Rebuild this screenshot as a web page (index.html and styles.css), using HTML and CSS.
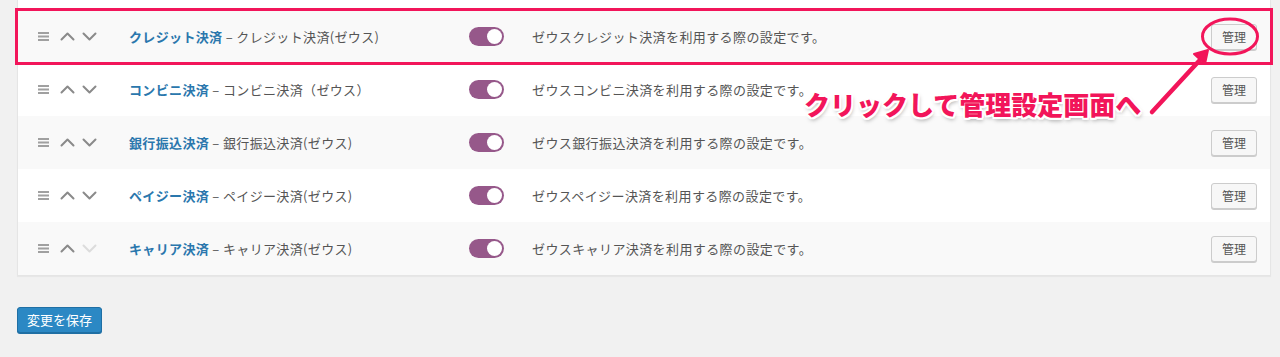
FILE: index.html
```html
<!DOCTYPE html>
<html lang="ja">
<head>
<meta charset="utf-8">
<title>決済設定</title>
<link rel="stylesheet" href="styles.css">
</head>
<body>
<div class="page">
  <div class="table">
    <div class="table-top"></div>

    <div class="row alt">
      <div class="sort">
        <svg class="ham" width="11" height="9" viewBox="0 0 11 9"><rect y="0" width="11" height="2"/><rect y="3.5" width="11" height="2"/><rect y="7" width="11" height="2"/></svg>
        <svg class="chev" width="15" height="9" viewBox="0 0 15 9"><polyline points="1.5,7.5 7.5,1.5 13.5,7.5"/></svg>
        <svg class="chev" width="15" height="9" viewBox="0 0 15 9"><polyline points="1.5,1.5 7.5,7.5 13.5,1.5"/></svg>
      </div>
      <div class="name"><a href="#">クレジット決済</a> – クレジット決済(ゼウス)</div>
      <div class="toggle"><span class="knob"></span></div>
      <div class="desc">ゼウスクレジット決済を利用する際の設定です。</div>
      <div class="action"><button class="btn">管理</button></div>
    </div>

    <div class="row">
      <div class="sort">
        <svg class="ham" width="11" height="9" viewBox="0 0 11 9"><rect y="0" width="11" height="2"/><rect y="3.5" width="11" height="2"/><rect y="7" width="11" height="2"/></svg>
        <svg class="chev" width="15" height="9" viewBox="0 0 15 9"><polyline points="1.5,7.5 7.5,1.5 13.5,7.5"/></svg>
        <svg class="chev" width="15" height="9" viewBox="0 0 15 9"><polyline points="1.5,1.5 7.5,7.5 13.5,1.5"/></svg>
      </div>
      <div class="name"><a href="#">コンビニ決済</a> – コンビニ決済（ゼウス）</div>
      <div class="toggle"><span class="knob"></span></div>
      <div class="desc">ゼウスコンビニ決済を利用する際の設定です。</div>
      <div class="action"><button class="btn">管理</button></div>
    </div>

    <div class="row alt">
      <div class="sort">
        <svg class="ham" width="11" height="9" viewBox="0 0 11 9"><rect y="0" width="11" height="2"/><rect y="3.5" width="11" height="2"/><rect y="7" width="11" height="2"/></svg>
        <svg class="chev" width="15" height="9" viewBox="0 0 15 9"><polyline points="1.5,7.5 7.5,1.5 13.5,7.5"/></svg>
        <svg class="chev" width="15" height="9" viewBox="0 0 15 9"><polyline points="1.5,1.5 7.5,7.5 13.5,1.5"/></svg>
      </div>
      <div class="name"><a href="#">銀行振込決済</a> – 銀行振込決済(ゼウス)</div>
      <div class="toggle"><span class="knob"></span></div>
      <div class="desc">ゼウス銀行振込決済を利用する際の設定です。</div>
      <div class="action"><button class="btn">管理</button></div>
    </div>

    <div class="row">
      <div class="sort">
        <svg class="ham" width="11" height="9" viewBox="0 0 11 9"><rect y="0" width="11" height="2"/><rect y="3.5" width="11" height="2"/><rect y="7" width="11" height="2"/></svg>
        <svg class="chev" width="15" height="9" viewBox="0 0 15 9"><polyline points="1.5,7.5 7.5,1.5 13.5,7.5"/></svg>
        <svg class="chev" width="15" height="9" viewBox="0 0 15 9"><polyline points="1.5,1.5 7.5,7.5 13.5,1.5"/></svg>
      </div>
      <div class="name"><a href="#">ペイジー決済</a> – ペイジー決済(ゼウス)</div>
      <div class="toggle"><span class="knob"></span></div>
      <div class="desc">ゼウスペイジー決済を利用する際の設定です。</div>
      <div class="action"><button class="btn">管理</button></div>
    </div>

    <div class="row alt">
      <div class="sort">
        <svg class="ham" width="11" height="9" viewBox="0 0 11 9"><rect y="0" width="11" height="2"/><rect y="3.5" width="11" height="2"/><rect y="7" width="11" height="2"/></svg>
        <svg class="chev" width="15" height="9" viewBox="0 0 15 9"><polyline points="1.5,7.5 7.5,1.5 13.5,7.5"/></svg>
        <svg class="chev disabled" width="15" height="9" viewBox="0 0 15 9"><polyline points="1.5,1.5 7.5,7.5 13.5,1.5"/></svg>
      </div>
      <div class="name"><a href="#">キャリア決済</a> – キャリア決済(ゼウス)</div>
      <div class="toggle"><span class="knob"></span></div>
      <div class="desc">ゼウスキャリア決済を利用する際の設定です。</div>
      <div class="action"><button class="btn">管理</button></div>
    </div>
  </div>

  <div class="footer">
    <button class="btn-primary">変更を保存</button>
  </div>
</div>

<svg class="overlay" width="1280" height="357" viewBox="0 0 1280 357">
  <rect x="16.5" y="9.5" width="1255" height="54" fill="none" stroke="#f2155a" stroke-width="3"/>
  <ellipse cx="1230" cy="36.5" rx="27.5" ry="17.5" fill="none" stroke="#f2155a" stroke-width="3"/>
  <line x1="1152" y1="112" x2="1199" y2="61" stroke="#f2155a" stroke-width="4.5" stroke-linecap="round"/>
  <polygon points="1208,50 1205,64 1194,54" fill="#f2155a" stroke="#f2155a" stroke-width="2" stroke-linejoin="round"/>
</svg>
<div class="callout">クリックして管理設定画面へ</div>
</body>
</html>
```
FILE: styles.css
```css
html, body {
  margin: 0;
  padding: 0;
}
body {
  background: #f1f1f1;
  font-family: "Noto Sans CJK JP", "Noto Sans", sans-serif;
  font-size: 13px;
  color: #555;
  position: relative;
  width: 1280px;
  height: 357px;
  overflow: hidden;
}
.page {
  padding: 0 9px 0 17px;
}
.table {
  background: #fff;
  border: 1px solid #e5e5e5;
  border-top: none;
  box-shadow: 0 1px 1px rgba(0, 0, 0, 0.04);
}
.table-top {
  height: 10px;
}
.row {
  display: grid;
  grid-template-columns: 91px 340px 63px 1fr auto;
  align-items: center;
  height: 53px;
  padding: 0 13px 0 20px;
  background: #fff;
}
.row.alt {
  background: #f9f9f9;
}
.sort {
  display: flex;
  align-items: center;
  gap: 7px;
}
.ham {
  fill: #a0a0a0;
  margin-right: 4px;
}
.chev polyline {
  fill: none;
  stroke: #8a8a8a;
  stroke-width: 2;
  stroke-linecap: round;
  stroke-linejoin: round;
}
.chev.disabled polyline {
  stroke: #dcdcdc;
}
.name {
  white-space: nowrap;
  line-height: 18px;
  letter-spacing: 0.35px;
}
.name a {
  color: #2a77ad;
  font-weight: 700;
  text-decoration: none;
}
.toggle {
  width: 35px;
  height: 19px;
  border-radius: 10px;
  background: #96588a;
  position: relative;
}
.knob {
  position: absolute;
  right: 2px;
  top: 2px;
  width: 15px;
  height: 15px;
  border-radius: 50%;
  background: #fff;
}
.desc {
  white-space: nowrap;
  line-height: 18px;
  letter-spacing: 0.4px;
}
.action {
  display: flex;
  justify-content: flex-end;
}
.btn {
  font-family: inherit;
  font-size: 12px;
  color: #555;
  background: #f7f7f7;
  border: 1px solid #cccccc;
  border-radius: 3px;
  box-shadow: 0 1px 0 #cccccc;
  height: 26px;
  padding: 0 10px;
  line-height: 24px;
}
.footer {
  padding-top: 31px;
}
.btn-primary {
  font-family: inherit;
  font-size: 13px;
  color: #fff;
  background: #2b88c4;
  border: 1px solid #1f6fa4;
  border-radius: 3px;
  box-shadow: 0 1px 0 #1f6fa4;
  height: 26px;
  padding: 0 9px;
  line-height: 24px;
}
.overlay {
  position: absolute;
  left: 0;
  top: 0;
  pointer-events: none;
}
.callout {
  position: absolute;
  left: 804px;
  top: 87px;
  font-size: 26px;
  font-weight: 900;
  color: #f2155a;
  white-space: nowrap;
  line-height: 34px;
  text-shadow:
    2px 0 0 #fff, -2px 0 0 #fff, 0 2px 0 #fff, 0 -2px 0 #fff,
    1.5px 1.5px 0 #fff, -1.5px 1.5px 0 #fff, 1.5px -1.5px 0 #fff, -1.5px -1.5px 0 #fff,
    1px 3px 4px rgba(0, 0, 0, 0.35);
}
```
